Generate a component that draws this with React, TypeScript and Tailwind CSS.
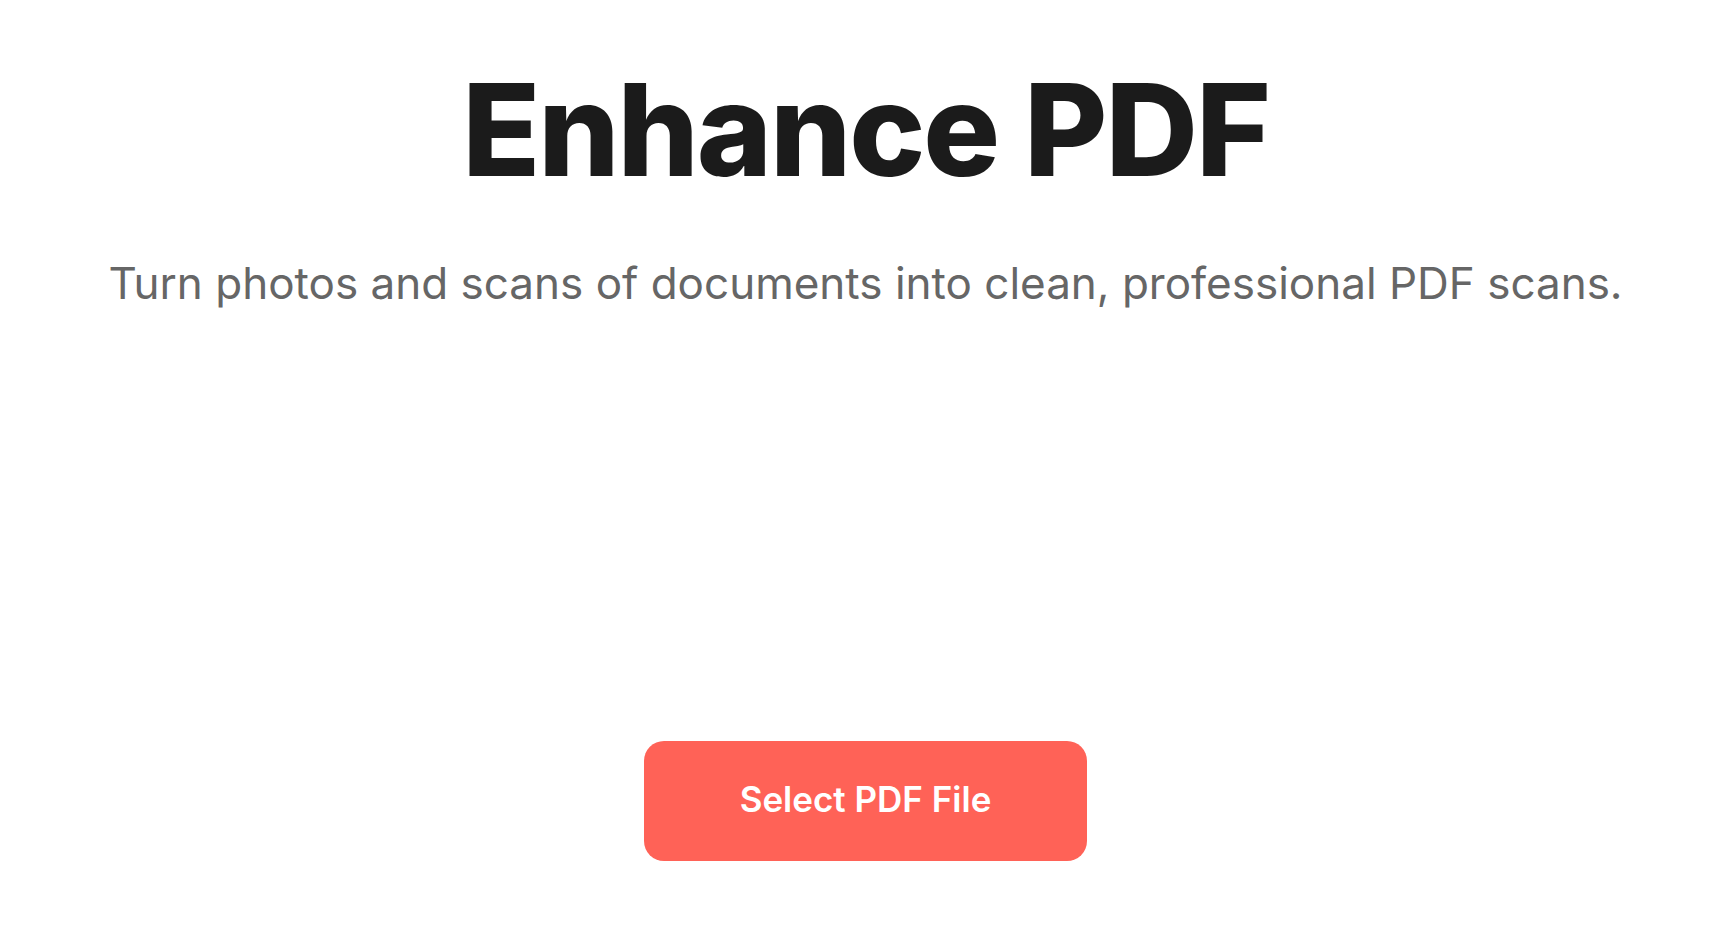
export default function App() {
  return (
    <div className="min-h-screen bg-white font-['Inter','Liberation_Sans',sans-serif]">
      <main className="flex flex-col items-center pt-[66px] text-center">
        <h1 className="text-9xl font-extrabold leading-none tracking-[-0.016em] text-[#1b1b1b]">
          Enhance PDF
        </h1>
        <p className="mt-[67px] text-[44px] leading-none text-[#666666]">
          Turn photos and scans of documents into clean, professional PDF scans.
        </p>

        {/* empty drop area */}
        <div className="h-[436px]" />

        <button
          type="button"
          className="rounded-[20px] bg-[#ff6257] px-24 pt-[38px] pb-[42px] text-[35px] leading-10 font-semibold text-white"
        >
          Select PDF File
        </button>
      </main>
    </div>
  );
}
